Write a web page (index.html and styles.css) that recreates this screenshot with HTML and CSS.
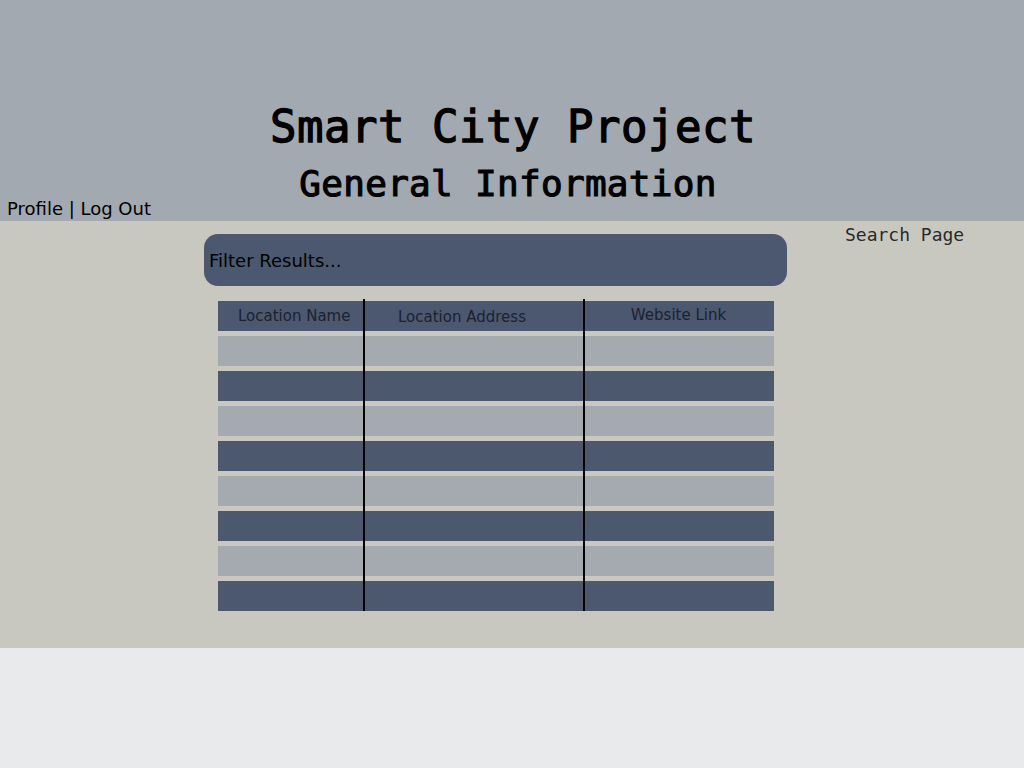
FILE: index.html
```html
<!DOCTYPE html>
<html lang="en">
<head>
<meta charset="utf-8">
<title>Smart City Project</title>
<link rel="stylesheet" href="styles.css">
</head>
<body>
<header class="top">
  <h1 class="title">Smart City Project</h1>
  <h2 class="subtitle">General Information</h2>
  <nav class="user-nav">Profile | Log Out</nav>
</header>
<main class="main">
  <section class="center">
    <div class="filter">Filter Results...</div>
    <div class="table">
      <div class="col col-name">
        <div class="cell head">Location Name</div>
        <div class="cell light"></div>
        <div class="cell dark"></div>
        <div class="cell light"></div>
        <div class="cell dark"></div>
        <div class="cell light"></div>
        <div class="cell dark"></div>
        <div class="cell light"></div>
        <div class="cell dark"></div>
      </div>
      <div class="col col-addr">
        <div class="cell head">Location Address</div>
        <div class="cell light"></div>
        <div class="cell dark"></div>
        <div class="cell light"></div>
        <div class="cell dark"></div>
        <div class="cell light"></div>
        <div class="cell dark"></div>
        <div class="cell light"></div>
        <div class="cell dark"></div>
      </div>
      <div class="col col-web">
        <div class="cell head">Website Link</div>
        <div class="cell light"></div>
        <div class="cell dark"></div>
        <div class="cell light"></div>
        <div class="cell dark"></div>
        <div class="cell light"></div>
        <div class="cell dark"></div>
        <div class="cell light"></div>
        <div class="cell dark"></div>
      </div>
    </div>
  </section>
  <a class="search-link">Search Page</a>
</main>
</body>
</html>
```

FILE: styles.css
```css
* { box-sizing: border-box; }
html, body { margin: 0; padding: 0; }
body {
  background: #e9eaec;
  font-family: "DejaVu Sans", Verdana, sans-serif;
  color: #000;
}
.top {
  background: #a3a9b0;
  height: 221px;
  padding-top: 105px;
  display: flex;
  flex-direction: column;
}
.title {
  margin: 0 0 0 2px;
  font-family: "DejaVu Sans Mono", monospace;
  font-weight: normal;
  -webkit-text-stroke: 1.3px #000;
  font-size: 44px;
  line-height: 44px;
  letter-spacing: 0.5px;
  text-align: center;
  color: #000;
}
.subtitle {
  margin: 17px 0 0 -8px;
  font-family: "DejaVu Sans Mono", monospace;
  font-weight: normal;
  -webkit-text-stroke: 1.1px #000;
  font-size: 36px;
  line-height: 36px;
  letter-spacing: 0.3px;
  text-align: center;
  color: #000;
}
.user-nav {
  margin: -2px 0 0 7px;
  font-size: 18px;
  line-height: 18px;
}
.main {
  background: #c8c8c0;
  height: 427px;
  padding-top: 13px;
  display: flex;
  align-items: flex-start;
}
.center {
  margin-left: 204px;
  width: 583px;
}
.filter {
  background: #4c586f;
  height: 52px;
  border-radius: 14px;
  display: flex;
  align-items: center;
  padding: 0 0 0 5px;
  font-size: 18px;
  color: #000;
}
.table {
  margin: 13px 0 0 14px;
  display: flex;
}
.col {
  display: flex;
  flex-direction: column;
  gap: 5px;
  padding-top: 2px;
}
.col-name { width: 147px; border-right: 2px solid #000; }
.col-addr { width: 220px; border-right: 2px solid #000; }
.col-web { width: 189px; }
.cell { height: 30px; }
.head {
  background: #4c586f;
  color: #1b2130;
  font-size: 15px;
  line-height: 30px;
}
.col-name .head { padding-left: 20px; }
.col-addr .head { padding-left: 33px; line-height: 32px; }
.col-web .head { text-align: center; line-height: 28px; padding-right: 2px; }
.light { background: #a4aab0; }
.dark { background: #4b586e; }
.search-link {
  margin: -8px 0 0 58px;
  font-family: "DejaVu Sans Mono", monospace;
  font-size: 18px;
  line-height: 18px;
  color: #2a2a2a;
}
```
